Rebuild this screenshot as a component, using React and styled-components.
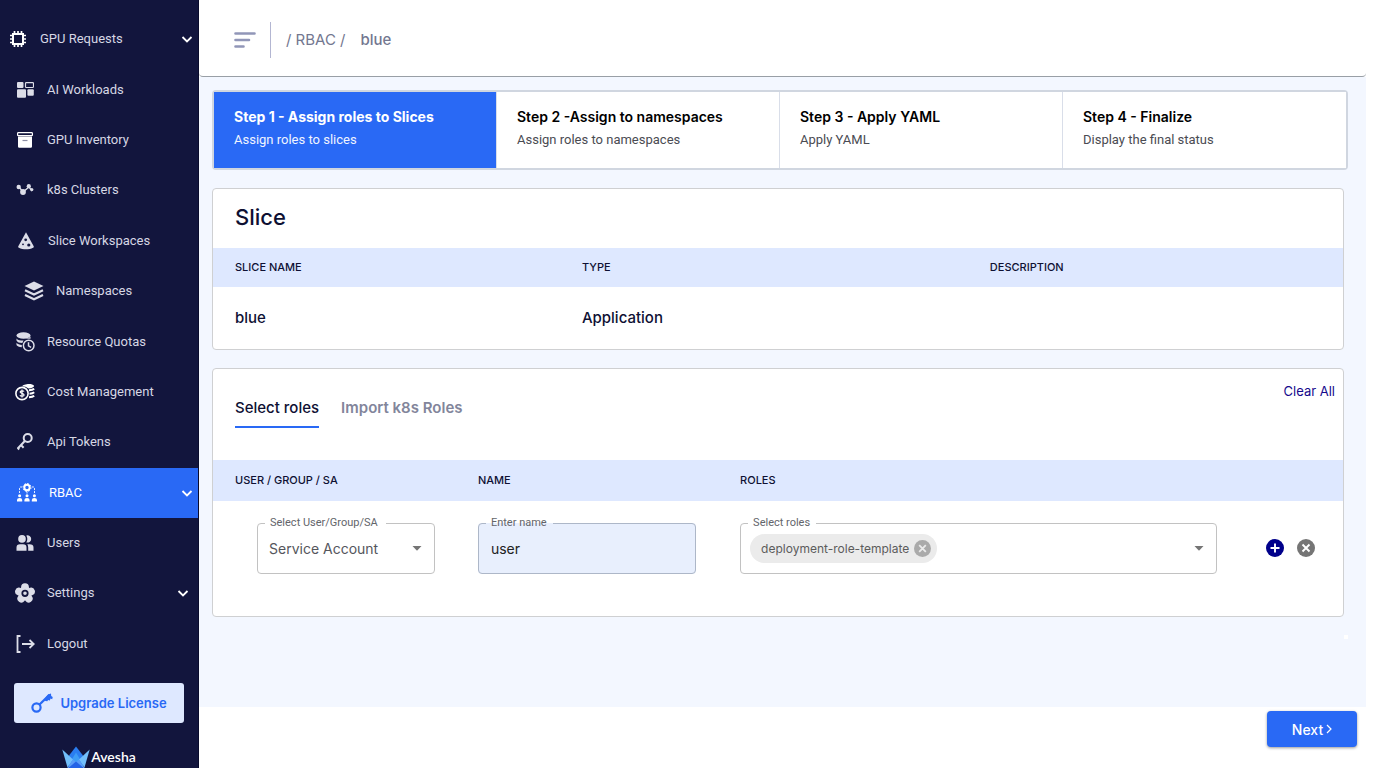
import React, { useState } from 'react';
import styled, { createGlobalStyle, ThemeProvider } from 'styled-components';

const theme = {
    navy: '#12153d',
    blue: '#2969f5',
    paleBlue: '#dee8ff',
    page: '#f3f7ff',
    ink: '#0e1033',
    muted: '#737790',
    line: '#cfd0d2',
};

const GlobalStyle = createGlobalStyle`
    * { box-sizing: border-box; }
    body {
        margin: 0;
        background: #fff;
        font-family: Inter, "Open Sans", sans-serif;
    }
    button, input, select { font-family: inherit; }
    svg { display: block; flex: none; }
`;

const Page = styled.div`
    display: flex;
    align-items: flex-start;
    padding-right: 32px;
`;

/* ---------- Sidebar ---------- */

const Sidebar = styled.aside`
    display: flex;
    flex-direction: column;
    flex: none;
    width: 199px;
    height: calc(100vh - 14px);
    min-height: 640px;
    padding-top: 14px;
    overflow: hidden;
    background: ${({ theme }) => theme.navy};
    border-right: 1px solid #090b2c;
`;

const Menu = styled.nav`
    display: flex;
    flex-direction: column;
    flex: 1;
`;

const MenuLink = styled.a`
    display: flex;
    align-items: center;
    flex: 1;
    gap: 12px;
    padding: 0 ${({ $end }) => $end || 5}px 0 ${({ $start }) => $start || 15}px;
    font-family: Roboto, sans-serif;
    font-size: 13px;
    line-height: 16px;
    color: ${({ $active }) => ($active ? '#fff' : '#d6d7e4')};
    background: ${({ $active, theme }) => ($active ? theme.blue : 'transparent')};
    text-decoration: none;

    span { flex: 1; white-space: nowrap; }
`;

const IconBox = styled.i`
    display: flex;
    justify-content: center;
    flex: none;
    width: 20px;
`;

const UpgradeButton = styled.button`
    display: flex;
    align-items: center;
    justify-content: center;
    gap: 7px;
    height: 40px;
    margin: 14px 14px 23px;
    padding: 0;
    border: 0;
    border-radius: 3px;
    background: ${({ theme }) => theme.paleBlue};
    color: ${({ theme }) => theme.blue};
    font-size: 13px;
    font-weight: 600;
    white-space: nowrap;
`;

const Brand = styled.div`
    display: flex;
    align-items: center;
    justify-content: center;
    gap: 1px;
    height: 22px;
    color: #fff;
    font: 600 14px/24px Lato, sans-serif;
`;

/* ---------- Header ---------- */

const Main = styled.main`
    flex: 1;
    min-width: 0;
`;

const Header = styled.header`
    display: flex;
    align-items: center;
    height: 77px;
    padding: 4px 35px 0;
    background: #fff;
    border-bottom: 1px solid #999fa6;
    border-radius: 0 0 4px 4px;
`;

const MenuToggle = styled.button`
    display: flex;
    align-items: center;
    height: 36px;
    margin-right: 15px;
    padding: 0 14px 0 0;
    border: 0;
    border-right: 1px solid #b3b6d2;
    background: none;
`;

const Crumbs = styled.nav`
    display: flex;
    gap: 15px;
    font-size: 15px;
    line-height: 18px;
    color: ${({ theme }) => theme.muted};

    a { color: inherit; text-decoration: none; }
    b { font-weight: 500; }
`;

const Content = styled.section`
    display: flex;
    flex-direction: column;
    gap: 18px;
    height: 630px;
    padding: 13px 18px 0 13px;
    background: ${({ theme }) => theme.page};
`;

/* ---------- Stepper ---------- */

const Steps = styled.ol`
    display: grid;
    grid-template-columns: repeat(4, 1fr);
    margin: 0;
    padding: 0;
    list-style: none;
    border: 2px solid #d0d6e0;
    border-radius: 4px;
    background: #fff;
`;

const Step = styled.li`
    height: 76px;
    padding: 15px 20px 0;
    color: ${({ $active }) => ($active ? '#fff' : '#000')};
    background: ${({ $active, theme }) => ($active ? theme.blue : '#fff')};
    background-clip: padding-box;

    &:not(:last-child) { border-right: 1px solid #d9dee9; }

    h3 {
        margin: 0 0 4px;
        font-size: 14px;
        font-weight: ${({ $active }) => ($active ? 700 : 600)};
        line-height: 20px;
    }
    p {
        margin: 0;
        font-size: 13px;
        line-height: 18px;
        font-family: Roboto, sans-serif;
        color: ${({ $active }) => ($active ? '#f0f4ff' : '#4a4b52')};
    }
`;

/* ---------- Cards and tables ---------- */

const Card = styled.section`
    margin-right: 4px;
    border: 1px solid ${({ theme }) => theme.line};
    border-radius: 4px;
    background: #fff;
`;

const CardTitle = styled.h2`
    margin: 0;
    padding: 0 22px 2px;
    font-size: 22px;
    font-weight: 500;
    line-height: 57px;
    color: ${({ theme }) => theme.ink};
`;

const Table = styled.table`
    width: 100%;
    table-layout: fixed;
    border-collapse: collapse;
    color: ${({ theme }) => theme.ink};

    th {
        height: ${({ $headHeight }) => $headHeight}px;
        padding: 0 0 2px 22px;
        background: ${({ theme }) => theme.paleBlue};
        font-size: 11px;
        font-weight: 500;
        text-align: left;
    }
    td {
        height: ${({ $rowHeight }) => $rowHeight}px;
        padding: 0 0 2px 22px;
        font-size: 15px;
        font-weight: 500;
    }
`;

const FieldTable = styled(Table)`
    td {
        padding-top: 15px;
        vertical-align: top;
    }
`;

const Col = styled.col`
    width: ${({ $width }) => $width};
`;

const TabBar = styled.div`
    display: flex;
    align-items: flex-start;
    justify-content: space-between;
    height: 91px;
    padding: 13px 8px 0 22px;
`;

const Tabs = styled.div`
    display: flex;
    gap: 22px;
    padding-top: 11px;
`;

const Tab = styled.button`
    height: 35px;
    padding: 0 0 4px;
    border: 0;
    border-bottom: 2px solid ${({ $active, theme }) => ($active ? theme.blue : 'transparent')};
    background: none;
    color: ${({ $active, theme }) => ($active ? theme.ink : '#82859b')};
    font-size: 15px;
    font-weight: ${({ $active }) => ($active ? 500 : 600)};
`;

const ClearButton = styled.button`
    padding: 0;
    border: 0;
    background: none;
    color: #160a8c;
    font-size: 13px;
    line-height: 18px;
`;

/* ---------- Role fields ---------- */

const Field = styled.fieldset`
    display: flex;
    align-items: center;
    width: ${({ $width }) => $width};
    height: 58px;
    min-width: 0;
    margin: 0 0 0 ${({ $indent }) => $indent || 0}px;
    padding: 0 12px 7px 11px;
    border: 1px solid ${({ $filled }) => ($filled ? '#adb7c8' : '#c2c2c2')};
    border-radius: 4px;
    background: ${({ $filled }) => ($filled ? '#e8effd' : '#fff')};

    legend {
        margin-left: -4px;
        padding: 0 ${({ $legendEnd }) => $legendEnd || 6}px 0 5px;
        font: 400 11px/14px Roboto, sans-serif;
        color: #63656b;
    }
`;

const SelectWrap = styled.div`
    display: flex;
    align-items: center;
    flex: 1;
    min-width: 0;
`;

const Select = styled.select`
    flex: 1;
    min-width: 0;
    padding: 0;
    border: 0;
    outline: 0;
    appearance: none;
    background: none;
    color: #55565c;
    font-size: 14px;
`;

const TextInput = styled.input`
    width: 100%;
    padding: 0 1px;
    border: 0;
    outline: 0;
    background: none;
    color: #222;
    font-size: 14px;
`;

const Chip = styled.span`
    display: flex;
    align-items: center;
    gap: 5px;
    height: 29px;
    margin-left: -2px;
    padding: 0 6px 0 11px;
    border-radius: 15px;
    background: #ebebeb;
    color: #5c5c5c;
    font-size: 12px;
    font-weight: 400;
    white-space: nowrap;
`;

const IconButton = styled.button`
    display: flex;
    padding: 0;
    border: 0;
    background: none;
`;

const RoleLine = styled.div`
    display: flex;
    align-items: center;
`;

const Actions = styled.div`
    display: flex;
    gap: 13px;
    padding: 6px 28px 0 49px;
`;

const Handle = styled.span`
    align-self: flex-end;
    width: 4px;
    height: 4px;
    background: #fff;
`;

const Footer = styled.footer`
    display: flex;
    justify-content: flex-end;
    padding: 4px 9px 0;
`;

const NextButton = styled.button`
    display: flex;
    align-items: center;
    justify-content: center;
    gap: 3px;
    width: 90px;
    height: 36px;
    padding: 0;
    border: 0;
    border-radius: 4px;
    background: ${({ theme }) => theme.blue};
    box-shadow: 0 1px 3px rgba(0, 0, 0, 0.4);
    color: #fff;
    font-size: 14px;
    font-weight: 500;
`;

/* ---------- Icons ---------- */

const Svg = ({ w, h, children }) => (
    <svg width={w} height={h} viewBox={`0 0 ${w} ${h}`} fill="none" aria-hidden="true">{children}</svg>
);

const pale = '#dcdde8';

const ChipIcon = () => (
    <Svg w={16} h={16}>
        <rect x="3" y="3" width="10" height="10" stroke="#fff" strokeWidth="2" />
        <path d="M4.5 0v3M8 0v3M11.5 0v3M4.5 13v3M8 13v3M11.5 13v3M0 4.5h3M0 8h3M0 11.5h3M13 4.5h3M13 8h3M13 11.5h3" stroke="#fff" strokeWidth="1.7" />
    </Svg>
);

const WorkloadsIcon = () => (
    <Svg w={17} h={16}>
        <rect x="0" y="0" width="6.5" height="6" rx="1" fill={pale} />
        <rect x="8.5" y="0.6" width="8" height="4.9" rx="0.8" stroke={pale} strokeWidth="1.2" />
        <rect x="0" y="7.2" width="9" height="8.5" rx="1" fill={pale} />
        <rect x="10.4" y="7.2" width="6.4" height="6.6" rx="1" fill={pale} />
    </Svg>
);

const InventoryIcon = () => (
    <Svg w={16} h={16}>
        <rect x="0.6" y="0.7" width="14.8" height="3" rx="0.8" stroke="#fff" strokeWidth="1.2" />
        <path d="M1 4.6h14v9.9a1.200 1.200 0 0 1-1.200 1.200H2.200A1.200 1.200 0 0 1 1 14.500z" fill="#fff" />
        <path d="M5.500 8.500h5" stroke="#8c8ea5" strokeWidth="1.2" />
    </Svg>
);

const ClustersIcon = () => (
    <Svg w={18} h={14}>
        <path d="M3 4l4 5 6-5 3 4" stroke={pale} strokeWidth="1.3" />
        <circle cx="2.700" cy="4" r="2.200" fill={pale} />
        <circle cx="7" cy="9" r="2.900" fill={pale} />
        <circle cx="12.800" cy="3.200" r="2.100" fill={pale} />
        <circle cx="15.800" cy="6.600" r="1.600" fill={pale} />
    </Svg>
);

const SliceIcon = () => (
    <Svg w={16} h={18}>
        <path d="M8 0.300L15.700 14.200c.3.700 0 1.200-.6 1.500-4 2.200-10.200 2.200-14.200 0-.6-.3-.9-.8-.6-1.500z" fill={pale} />
        <circle cx="7.700" cy="7.800" r="1.400" fill="#12153d" />
        <circle cx="5" cy="12.300" r="0.900" fill="#12153d" />
        <circle cx="10.800" cy="13" r="1.600" fill="#12153d" />
    </Svg>
);

const LayersIcon = () => (
    <Svg w={20} h={20}>
        <path d="M10 0.500L19.500 5 10 9.500 0.500 5z" fill={pale} />
        <path d="M1 9.300l9 4.300 9-4.300M1 14l9 4.300 9-4.300" stroke={pale} strokeWidth="2.200" />
    </Svg>
);

const QuotaIcon = () => (
    <Svg w={19} h={20}>
        <ellipse cx="7.500" cy="3.500" rx="7" ry="3.300" fill={pale} />
        <path d="M0.500 6.400c1.500 1.900 4 2.200 7 2.200L6.300 11C3.600 11 1 10.200.5 8.500zM0.500 10.800c1.200 1.600 3 2 5.300 2.100v2.300C3.100 15 1 14.200.5 13z" fill={pale} />
        <circle cx="12.700" cy="13.500" r="5.300" stroke={pale} strokeWidth="1.500" />
        <path d="M12.500 10.300v3.600l2.600 1.500" stroke={pale} strokeWidth="1.500" />
        <path d="M9 6.600c2.500-.2 4.500-1 5.500-2v2.200z" fill={pale} />
    </Svg>
);

const CostIcon = () => (
    <Svg w={20} h={18}>
        <path d="M7 3.300C8 .800 17.500 -.3 19 2.700c.6 1.300-1.600 2.600-5.600 2.900C11.500 4 9.500 3.300 7 3.300z" fill="#fff" />
        <path d="M14 7.200c2.500-.1 4.200-.6 5.200-1.400M14.500 10.700c2.200-.1 3.700-.5 4.700-1.400M14 14.200c2.400-.1 4.200-.6 5.200-1.500" stroke="#fff" strokeWidth="1.900" />
        <circle cx="7" cy="10.500" r="6.100" stroke="#fff" strokeWidth="1.600" />
        <path d="M9 8.600c-.4-.9-3.800-1.300-3.900.4 0 1.700 4 1 4 2.900 0 1.700-3.600 1.400-4.200.3M7 6.400v8.200" stroke="#fff" strokeWidth="1.200" />
    </Svg>
);

const TokenIcon = () => (
    <Svg w={16} h={18}>
        <circle cx="10.700" cy="5" r="4" stroke={pale} strokeWidth="2" />
        <path d="M7.800 8L1 15.200l1.200 1.300M4 12l2.600 2.700" stroke={pale} strokeWidth="2" />
    </Svg>
);

const RbacIcon = () => (
    <Svg w={20} h={19}>
        <circle cx="10" cy="4.500" r="2.700" stroke="#fff" strokeWidth="2" />
        <circle cx="10" cy="4.500" r="4" stroke="#fff" strokeWidth="1" strokeDasharray="1.600 1.500" />
        <path d="M5 4H3.500Q2.500 4 2.500 5v5M15 4h1.500q1 0 1 1v5M10 8.500v2" stroke="#fff" strokeWidth="0.900" strokeDasharray="2 1" />
        {[2.6, 10, 17.4].map((x) => (
            <g key={x} fill="#fff">
                <circle cx={x} cy="12.800" r="1.500" />
                <path d={`M${x - 2.6} 18.500v-1.500q0-2 2.600-2t2.600 2v1.500z`} />
            </g>
        ))}
    </Svg>
);

const UsersIcon = () => (
    <Svg w={18} h={16}>
        <circle cx="6" cy="3.900" r="3.800" fill={pale} />
        <path d="M0.500 15.700v-3.200q0-3.300 3.500-3.300h3q3.500 0 3.500 3.300v3.200zM10.300 0.400a3.700 3.700 0 1 1 0 7q2-3.400 0-7zM11.300 9.200h2.200q4 0 4 3.300v3.200h-5.300v-3.200q0-2-.9-3.300z" fill={pale} />
    </Svg>
);

const SettingsIcon = () => (
    <Svg w={20} h={20}>
        {[0, 72, 144, 216, 288].map((deg) => (
            <circle key={deg} cx="10" cy="4.200" r="3.900" fill={pale} transform={`rotate(${deg} 10 10.500)`} />
        ))}
        <circle cx="10" cy="10.500" r="6.800" fill={pale} />
        <circle cx="10" cy="10.300" r="2.700" fill={pale} stroke="#12153d" strokeWidth="1.800" />
    </Svg>
);

const LogoutIcon = () => (
    <Svg w={19} h={18}>
        <path d="M4.500 1H1.500v16h3M6 9h11.500M13.500 5l4.200 4-4.200 4" stroke={pale} strokeWidth="1.800" />
    </Svg>
);

const ChevronDown = () => (
    <Svg w={12} h={8}>
        <path d="M1.500 2L6 6.500l4.500-4.500" stroke="#fff" strokeWidth="1.800" />
    </Svg>
);

const KeyIcon = () => (
    <Svg w={22} h={20}>
        <circle cx="5.500" cy="14.500" r="4.100" stroke="#2969f5" strokeWidth="2.200" />
        <path d="M8.500 11.500L18.500 1.800" stroke="#2969f5" strokeWidth="2.300" />
        <path d="M13 6.500l4-5 3-1 .2 2.500 1.500 1-.5 2.200-1.700-.7-.6 2-1.800-.6-.8 1.400-1.800-.2z" fill="#2969f5" />
    </Svg>
);

const Crown = () => (
    <Svg w={28} h={22}>
        <path d="M14 0.500L7 9.500v11.500h14V9.500z" fill="#2a7df0" />
        <path d="M14 6.500L9.500 14 14 18l4.500-4z" fill="#3d9df6" />
        <path d="M0.300 3.500L11 13.500 5.500 21.500z" fill="#72bffb" />
        <path d="M27.700 3.500L17 13.500l5.500 8z" fill="#72bffb" />
        <path d="M11 13.500l3 2.500-7 6H5.300zM17 13.500L14 16l7 6h1.700z" fill="#5a9cf7" />
        <path d="M14 15.500l7.500 6.500h-15z" fill="#2563e6" />
    </Svg>
);

const LinesIcon = () => (
    <Svg w={22} h={16}>
        <path d="M1.500 1.500h19M1.500 8h13.500M1.500 14.500h8" stroke="#9196b8" strokeWidth="2.600" strokeLinecap="round" />
    </Svg>
);

const Caret = () => (
    <Svg w={10} h={5}>
        <path d="M0.500 0h9L5 4.700z" fill="#757575" />
    </Svg>
);

const CircleIcon = ({ size, fill, plus, mark = '#fff' }) => (
    <svg width={size} height={size} viewBox="0 0 18 18" aria-hidden="true">
        <circle cx="9" cy="9" r="9" fill={fill} />
        <path d={plus ? 'M9 4.500v9M4.500 9h9' : 'M5.500 5.500l7 7M12.500 5.500l-7 7'} stroke={mark} strokeWidth="1.900" />
    </svg>
);

const NextArrow = () => (
    <Svg w={6} h={10}>
        <path d="M1 1l4 4-4 4" stroke="#fff" strokeWidth="1.200" />
    </Svg>
);

const menu = [
    { label: 'GPU Requests', Icon: ChipIcon, start: 8, more: true },
    { label: 'AI Workloads', Icon: WorkloadsIcon },
    { label: 'GPU Inventory', Icon: InventoryIcon },
    { label: 'k8s Clusters', Icon: ClustersIcon },
    { label: 'Slice Workspaces', Icon: SliceIcon, start: 16 },
    { label: 'Namespaces', Icon: LayersIcon, start: 24 },
    { label: 'Resource Quotas', Icon: QuotaIcon },
    { label: 'Cost Management', Icon: CostIcon },
    { label: 'Api Tokens', Icon: TokenIcon },
    { label: 'RBAC', Icon: RbacIcon, start: 17, more: true, active: true },
    { label: 'Users', Icon: UsersIcon },
    { label: 'Settings', Icon: SettingsIcon, more: true, end: 9 },
    { label: 'Logout', Icon: LogoutIcon },
];

const steps = [
    { title: 'Step 1 - Assign roles to Slices', text: 'Assign roles to slices' },
    { title: 'Step 2 -Assign to namespaces', text: 'Assign roles to namespaces' },
    { title: 'Step 3 - Apply YAML', text: 'Apply YAML' },
    { title: 'Step 4 - Finalize', text: 'Display the final status' },
];

const SideBar = () => (
    <Sidebar>
        <Menu>
            {menu.map(({ label, Icon, start, end, more, active }) => (
                <MenuLink key={label} href="#" $start={start} $end={end} $active={active}>
                    <IconBox><Icon /></IconBox>
                    <span>{label}</span>
                    {more && <ChevronDown />}
                </MenuLink>
            ))}
        </Menu>
        <UpgradeButton><KeyIcon />Upgrade License</UpgradeButton>
        <Brand><Crown />Avesha</Brand>
    </Sidebar>
);

const SliceCard = () => (
    <Card>
        <CardTitle>Slice</CardTitle>
        <Table $headHeight={39} $rowHeight={62}>
            <colgroup>
                <Col $width="30.7%" />
                <Col $width="36.1%" />
                <Col />
            </colgroup>
            <thead>
                <tr><th>SLICE NAME</th><th>TYPE</th><th>DESCRIPTION</th></tr>
            </thead>
            <tbody>
                <tr><td>blue</td><td>Application</td><td></td></tr>
            </tbody>
        </Table>
    </Card>
);

const RolesCard = () => {
    const [tab, setTab] = useState('select');
    const [name, setName] = useState('user');

    return (
        <Card>
            <TabBar>
                <Tabs role="tablist">
                    <Tab role="tab" $active={tab === 'select'} onClick={() => setTab('select')}>Select roles</Tab>
                    <Tab role="tab" $active={tab === 'import'} onClick={() => setTab('import')}>Import k8s Roles</Tab>
                </Tabs>
                <ClearButton>Clear All</ClearButton>
            </TabBar>
            <FieldTable $headHeight={41} $rowHeight={115}>
                <colgroup>
                    <Col $width="21.5%" />
                    <Col $width="23.2%" />
                    <Col />
                </colgroup>
                <thead>
                    <tr><th>USER / GROUP / SA</th><th>NAME</th><th>ROLES</th></tr>
                </thead>
                <tbody>
                    <tr>
                        <td>
                            <Field $width="178px" $indent={22} $legendEnd={8}>
                                <legend><label htmlFor="subject">Select User/Group/SA</label></legend>
                                <SelectWrap>
                                    <Select id="subject">
                                        <option>Service Account</option>
                                        <option>User</option>
                                        <option>Group</option>
                                    </Select>
                                    <Caret />
                                </SelectWrap>
                            </Field>
                        </td>
                        <td>
                            <Field $width="218px" $filled>
                                <legend><label htmlFor="name">Enter name</label></legend>
                                <TextInput id="name" value={name} onChange={(e) => setName(e.target.value)} />
                            </Field>
                        </td>
                        <td>
                            <RoleLine>
                                <Field $width="100%">
                                    <legend><label htmlFor="roles">Select roles</label></legend>
                                    <SelectWrap>
                                        <Chip>
                                            deployment-role-template
                                            <IconButton aria-label="Remove role"><CircleIcon size={17} fill="#aaa" mark="#ebebeb" /></IconButton>
                                        </Chip>
                                        <Select id="roles"><option></option></Select>
                                        <Caret />
                                    </SelectWrap>
                                </Field>
                                <Actions>
                                    <IconButton aria-label="Add row"><CircleIcon size={18} fill="#00008b" plus /></IconButton>
                                    <IconButton aria-label="Remove row"><CircleIcon size={18} fill="#757575" /></IconButton>
                                </Actions>
                            </RoleLine>
                        </td>
                    </tr>
                </tbody>
            </FieldTable>
        </Card>
    );
};

const App = () => (
    <ThemeProvider theme={theme}>
        <GlobalStyle />
        <Page>
            <SideBar />
            <Main>
                <Header>
                    <MenuToggle aria-label="Toggle menu"><LinesIcon /></MenuToggle>
                    <Crumbs><a href="#">/ RBAC /</a><b>blue</b></Crumbs>
                </Header>
                <Content>
                    <Steps>
                        {steps.map(({ title, text }, i) => (
                            <Step key={title} $active={i === 0}>
                                <h3>{title}</h3>
                                <p>{text}</p>
                            </Step>
                        ))}
                    </Steps>
                    <SliceCard />
                    <RolesCard />
                    <Handle />
                </Content>
                <Footer>
                    <NextButton>Next<NextArrow /></NextButton>
                </Footer>
            </Main>
        </Page>
    </ThemeProvider>
);

export default App;
